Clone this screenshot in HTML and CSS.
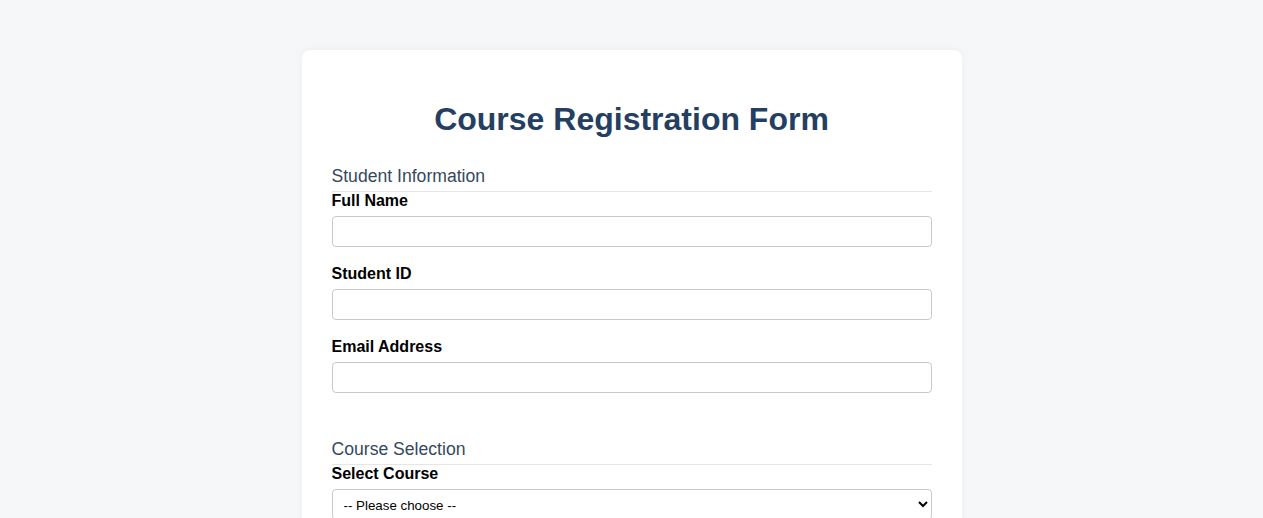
FILE: index.html
```html
<!DOCTYPE html>
<html lang="en">
<head>
<meta charset="utf-8">
<title>Course Registration Form</title>
<link rel="stylesheet" href="styles.css">
</head>
<body>
<div class="card">
  <h1 class="title">Course Registration Form</h1>
  <form>
    <div class="section">
      <h2 class="section-title">Student Information</h2>
      <div class="group">
        <label class="label" for="name">Full Name</label>
        <input class="field" type="text" id="name">
      </div>
      <div class="group">
        <label class="label" for="sid">Student ID</label>
        <input class="field" type="text" id="sid">
      </div>
      <div class="group">
        <label class="label" for="email">Email Address</label>
        <input class="field" type="email" id="email">
      </div>
    </div>
    <div class="section">
      <h2 class="section-title">Course Selection</h2>
      <div class="group">
        <label class="label" for="course">Select Course</label>
        <select class="field select" id="course">
          <option>-- Please choose --</option>
        </select>
      </div>
    </div>
  </form>
</div>
</body>
</html>
```
FILE: styles.css
```css
html, body {
  margin: 0;
  padding: 0;
}
body {
  background: #f6f7f9;
  font-family: "Liberation Sans", Arial, sans-serif;
  padding: 50px 0;
}
.card {
  width: 600px;
  margin: 0 auto;
  padding: 30px;
  background: #ffffff;
  border-radius: 8px;
  box-shadow: 0 0 10px rgba(0, 0, 0, 0.05);
}
.title {
  margin: 21px 0 28px;
  text-align: center;
  font-size: 32px;
  font-weight: bold;
  color: #253f62;
}
.section {
  margin-bottom: 46px;
}
.section-title {
  margin: 0;
  padding-bottom: 4px;
  border-bottom: 1px solid #e6e6e6;
  font-size: 17.6px;
  font-weight: normal;
  color: #34495e;
}
.group {
  margin-bottom: 18px;
}
.label {
  display: block;
  margin-bottom: 6px;
  font-size: 16px;
  font-weight: bold;
  color: #000;
}
.field {
  display: block;
  box-sizing: border-box;
  width: 100%;
  height: 31px;
  padding: 6px 8px;
  border: 1px solid #c8c8c8;
  border-radius: 4px;
  background: #fff;
  font-family: "Liberation Sans", Arial, sans-serif;
  font-size: 13.333px;
  color: #000;
}
.select {
  padding: 7px 7px 5px;
}
```
